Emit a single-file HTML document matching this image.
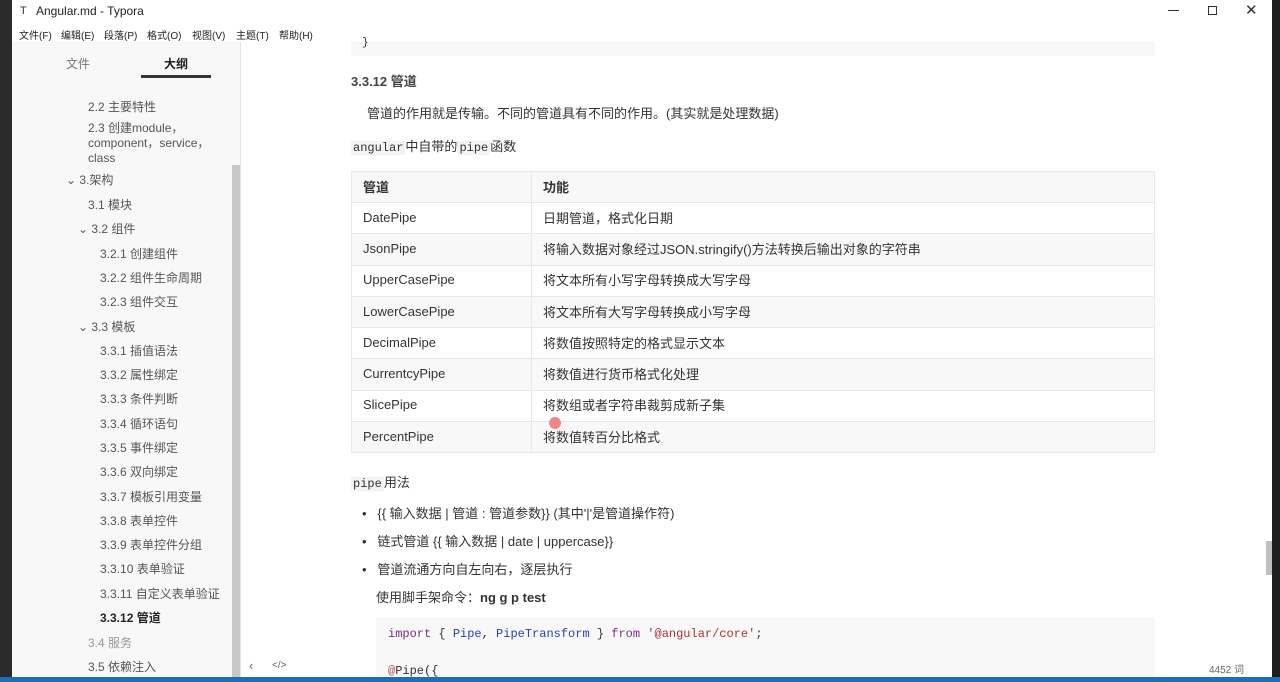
<!DOCTYPE html>
<html><head><meta charset="utf-8"><style>
*{margin:0;padding:0;box-sizing:border-box}
body{width:1280px;height:682px;overflow:hidden;position:relative;background:#fff;font-family:"Liberation Sans","Noto Sans CJK SC",sans-serif;color:#333}
.a{position:absolute;white-space:nowrap}
.side{position:absolute;left:12px;top:42px;width:228px;height:635px;background:#f8f8f8}
.s{position:absolute;font-size:12px;color:#555;white-space:nowrap}
.c{position:absolute;font-size:13px;color:#333;white-space:nowrap}
.mono{font-family:"Liberation Mono",monospace}
table{position:absolute;left:351px;top:171px;width:804px;border-collapse:collapse;font-size:13px}
td{height:31.3px;border:1px solid #e8e8e8;padding:0 11px;color:#333;padding-bottom:2px}
td:first-child{width:180px}
tr:nth-child(odd){background:#f8f8f8}
th{height:31px;border:1px solid #e8e8e8;padding:0 11px;text-align:left;font-weight:bold;background:#f8f8f8;padding-bottom:1px}
</style></head><body>
<div class="a" style="left:0;top:0;width:12px;height:682px;background:#2b2b2b"></div>
<div class="a" style="left:1272px;top:0;width:8px;height:682px;background:#1e1e1e"></div>
<div class="a" style="left:0;top:677px;width:1280px;height:5px;background:#1b6fb8"></div>
<div class="a" style="left:20px;top:5px;font-size:11px;color:#333">T</div>
<div class="a" style="left:36px;top:4px;font-size:12px;color:#222">Angular.md - Typora</div>
<div class="a" style="left:1168px;top:10px;width:11px;height:1px;background:#333"></div>
<div class="a" style="left:1208px;top:6px;width:9px;height:9px;border:1px solid #333"></div>
<div class="a" style="left:1245px;top:1px;font-size:15px;color:#333">✕</div>
<div class="a" style="left:19px;top:27px;font-size:10px;color:#222">
<span style="position:absolute;left:0">文件(F)</span><span style="position:absolute;left:42px">编辑(E)</span><span style="position:absolute;left:85px">段落(P)</span><span style="position:absolute;left:128px">格式(O)</span><span style="position:absolute;left:173px">视图(V)</span><span style="position:absolute;left:217px">主题(T)</span><span style="position:absolute;left:260px">帮助(H)</span></div>
<div class="side"></div>
<div class="a" style="left:66px;top:55px;font-size:12px;color:#777">文件</div>
<div class="a" style="left:164px;top:55px;font-size:12px;font-weight:bold;color:#222">大纲</div>
<div class="a" style="left:141px;top:75px;width:70px;height:3px;background:#333"></div>
<div class="a" style="left:232px;top:165px;width:8px;height:512px;background:#c8c8c8"></div>
<div class="a" style="left:240px;top:42px;width:1px;height:635px;background:#e5e5e5"></div>
<div class="s" style="left:88px;top:98px">2.2 主要特性</div>
<div class="s" style="left:88px;top:121px;line-height:15px">2.3 创建module，<br>component，service，<br>class</div>
<div class="s" style="left:66px;top:171px">⌄ 3.架构</div>
<div class="s" style="left:88px;top:196px">3.1 模块</div>
<div class="s" style="left:78px;top:220px">⌄ 3.2 组件</div>
<div class="s" style="left:100px;top:245px">3.2.1 创建组件</div>
<div class="s" style="left:100px;top:269px">3.2.2 组件生命周期</div>
<div class="s" style="left:100px;top:293px">3.2.3 组件交互</div>
<div class="s" style="left:78px;top:318px">⌄ 3.3 模板</div>
<div class="s" style="left:100px;top:342px">3.3.1 插值语法</div>
<div class="s" style="left:100px;top:366px">3.3.2 属性绑定</div>
<div class="s" style="left:100px;top:390px">3.3.3 条件判断</div>
<div class="s" style="left:100px;top:415px">3.3.4 循环语句</div>
<div class="s" style="left:100px;top:439px">3.3.5 事件绑定</div>
<div class="s" style="left:100px;top:463px">3.3.6 双向绑定</div>
<div class="s" style="left:100px;top:488px">3.3.7 模板引用变量</div>
<div class="s" style="left:100px;top:512px">3.3.8 表单控件</div>
<div class="s" style="left:100px;top:536px">3.3.9 表单控件分组</div>
<div class="s" style="left:100px;top:560px">3.3.10 表单验证</div>
<div class="s" style="left:100px;top:585px">3.3.11 自定义表单验证</div>
<div class="s" style="left:100px;top:609px;font-weight:bold;color:#222">3.3.12 管道</div>
<div class="s" style="left:88px;top:634px;color:#999">3.4 服务</div>
<div class="s" style="left:88px;top:658px">3.5 依赖注入</div>
<div class="a" style="left:249px;top:658px;font-size:13px;color:#666">‹</div>
<div class="a" style="left:272px;top:660px;font-size:10px;color:#666">&lt;/&gt;</div>
<div class="a" style="left:1209px;top:661px;font-size:10px;color:#666">4452 词</div>
<div class="a" style="left:1266px;top:541px;width:6px;height:34px;background:#c0c0c0"></div>
<div class="a" style="left:351px;top:42px;width:804px;height:14px;background:#f8f8f8"></div>
<div class="a mono" style="left:362px;top:37px;font-size:11px">}</div>
<div class="c" style="left:351px;top:71px;font-weight:bold;font-size:13px;color:#444">3.3.12 管道</div>
<div class="c" style="left:367px;top:103px">管道的作用就是传输。不同的管道具有不同的作用。(其实就是处理数据)</div>
<div class="c" style="left:351px;top:136px"><span class="mono" style="background:#f3f3f3;font-size:12px;padding:0 2px">angular</span>中自带的<span class="mono" style="background:#f3f3f3;font-size:12px;padding:0 2px">pipe</span>函数</div>
<table>
<tr><th>管道</th><th>功能</th></tr>
<tr><td>DatePipe</td><td>日期管道，格式化日期</td></tr>
<tr><td>JsonPipe</td><td>将输入数据对象经过JSON.stringify()方法转换后输出对象的字符串</td></tr>
<tr><td>UpperCasePipe</td><td>将文本所有小写字母转换成大写字母</td></tr>
<tr><td>LowerCasePipe</td><td>将文本所有大写字母转换成小写字母</td></tr>
<tr><td>DecimalPipe</td><td>将数值按照特定的格式显示文本</td></tr>
<tr><td>CurrentcyPipe</td><td>将数值进行货币格式化处理</td></tr>
<tr><td>SlicePipe</td><td>将数组或者字符串裁剪成新子集</td></tr>
<tr><td>PercentPipe</td><td>将数值转百分比格式</td></tr>
</table>
<div class="a" style="left:549px;top:417px;width:12px;height:12px;border-radius:6px;background:#e88"></div>
<div class="c" style="left:351px;top:472px"><span class="mono" style="background:#f3f3f3;font-size:12px;padding:0 2px">pipe</span>用法</div>
<div class="c" style="left:362px;top:503px">•&nbsp;&nbsp; {{ 输入数据 | 管道 : 管道参数}} (其中'|'是管道操作符)</div>
<div class="c" style="left:362px;top:531px">•&nbsp;&nbsp; 链式管道 {{ 输入数据 | date | uppercase}}</div>
<div class="c" style="left:362px;top:559px">•&nbsp;&nbsp; 管道流通方向自左向右，逐层执行</div>
<div class="c" style="left:376px;top:587px">使用脚手架命令：<b>ng g p test</b></div>
<div class="a" style="left:376px;top:618px;width:779px;height:59px;background:#f8f8f8"></div>
<div class="a mono" style="left:388px;top:627px;font-size:12px;color:#333"><span style="color:#7a2d8a">import</span> { <span style="color:#2a3fb0">Pipe</span>, <span style="color:#2a3fb0">PipeTransform</span> } <span style="color:#7a2d8a">from</span> <span style="color:#a33">'@angular/core'</span>;</div>
<div class="a mono" style="left:388px;top:664px;font-size:12px;color:#333"><span style="color:#a55">@</span>Pipe({</div>
</body></html>
